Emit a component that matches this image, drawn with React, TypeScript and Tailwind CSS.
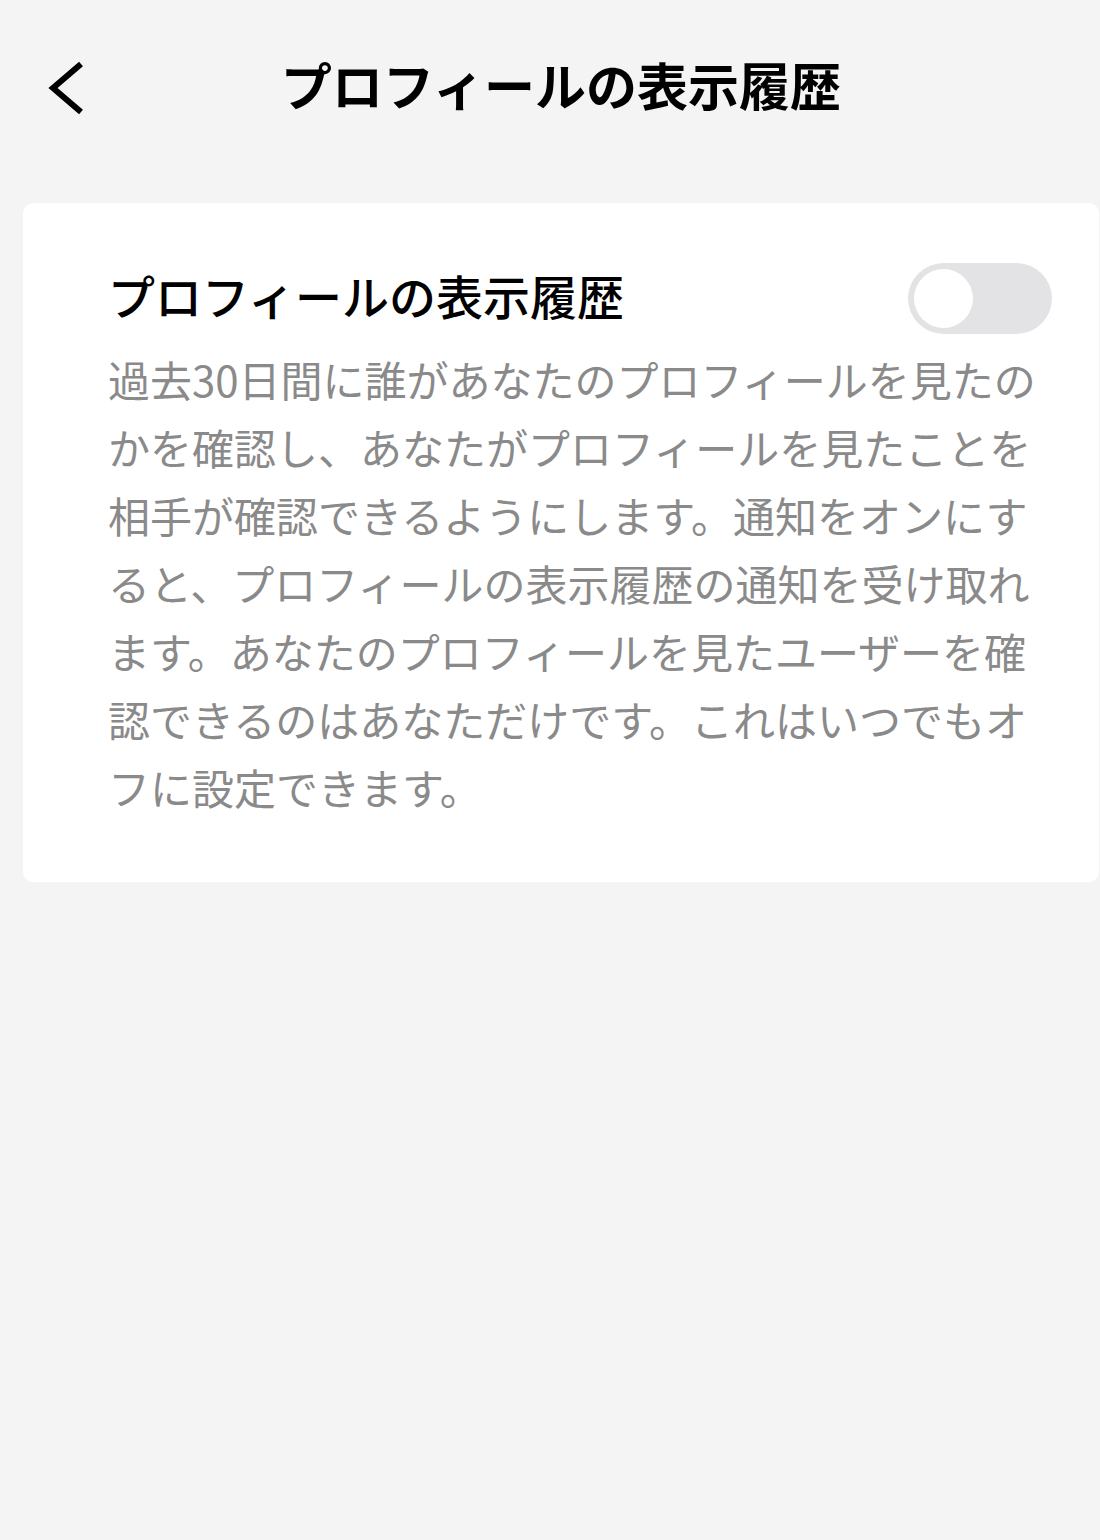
import { useState } from 'react';

const lines = [
  '過去30日間に誰があなたのプロフィールを見たの',
  'かを確認し、あなたがプロフィールを見たことを',
  '相手が確認できるようにします。通知をオンにす',
  'ると、プロフィールの表示履歴の通知を受け取れ',
  'ます。あなたのプロフィールを見たユーザーを確',
  '認できるのはあなただけです。これはいつでもオ',
  'フに設定できます。',
];

function Toggle({ on, onChange }: { on: boolean; onChange: () => void }) {
  return (
    <button
      onClick={onChange}
      className={`relative w-[144px] h-[71px] rounded-full shrink-0 transition-colors ${on ? 'bg-[#fe2c55]' : 'bg-[#e3e3e5]'}`}
    >
      <span
        className={`absolute top-[6px] w-[59px] h-[59px] rounded-full bg-white transition-all ${on ? 'left-[79px]' : 'left-[6px]'}`}
      />
    </button>
  );
}

export default function App() {
  const [enabled, setEnabled] = useState(false);

  return (
    <div
      className="min-h-[1540px] w-full bg-[#f4f4f4]"
      style={{ fontFamily: '"Noto Sans CJK JP", "Noto Sans", sans-serif' }}
    >
      {/* Header */}
      <div className="h-[176px] flex items-center px-[48px]">
        <svg width="36" height="54" viewBox="0 0 36 54" fill="none" className="shrink-0">
          <path d="M33 3 L5 27 L33 51" stroke="#000" strokeWidth="6" strokeLinecap="butt" strokeLinejoin="miter" />
        </svg>
        <h1 className="flex-1 text-center text-[51px] font-bold text-black leading-none pb-[8px]">
          プロフィールの表示履歴
        </h1>
        <div className="w-[14px] shrink-0" />
      </div>

      {/* Card */}
      <div className="mt-[27px] ml-[23px] mr-[1px] bg-white rounded-[10px] pt-[60px] pb-[61px] pl-[85px] pr-[47px]">
        <div className="flex items-center justify-between">
          <div className="text-[47px] font-medium text-black leading-[63px] pb-[8px]">プロフィールの表示履歴</div>
          <Toggle on={enabled} onChange={() => setEnabled(!enabled)} />
        </div>
        <div className="mt-[11px] text-[42px] leading-[68px] text-[#8a8a8a]">
          {lines.map(l => (
            <div key={l} className="whitespace-nowrap">{l}</div>
          ))}
        </div>
      </div>
    </div>
  );
}
